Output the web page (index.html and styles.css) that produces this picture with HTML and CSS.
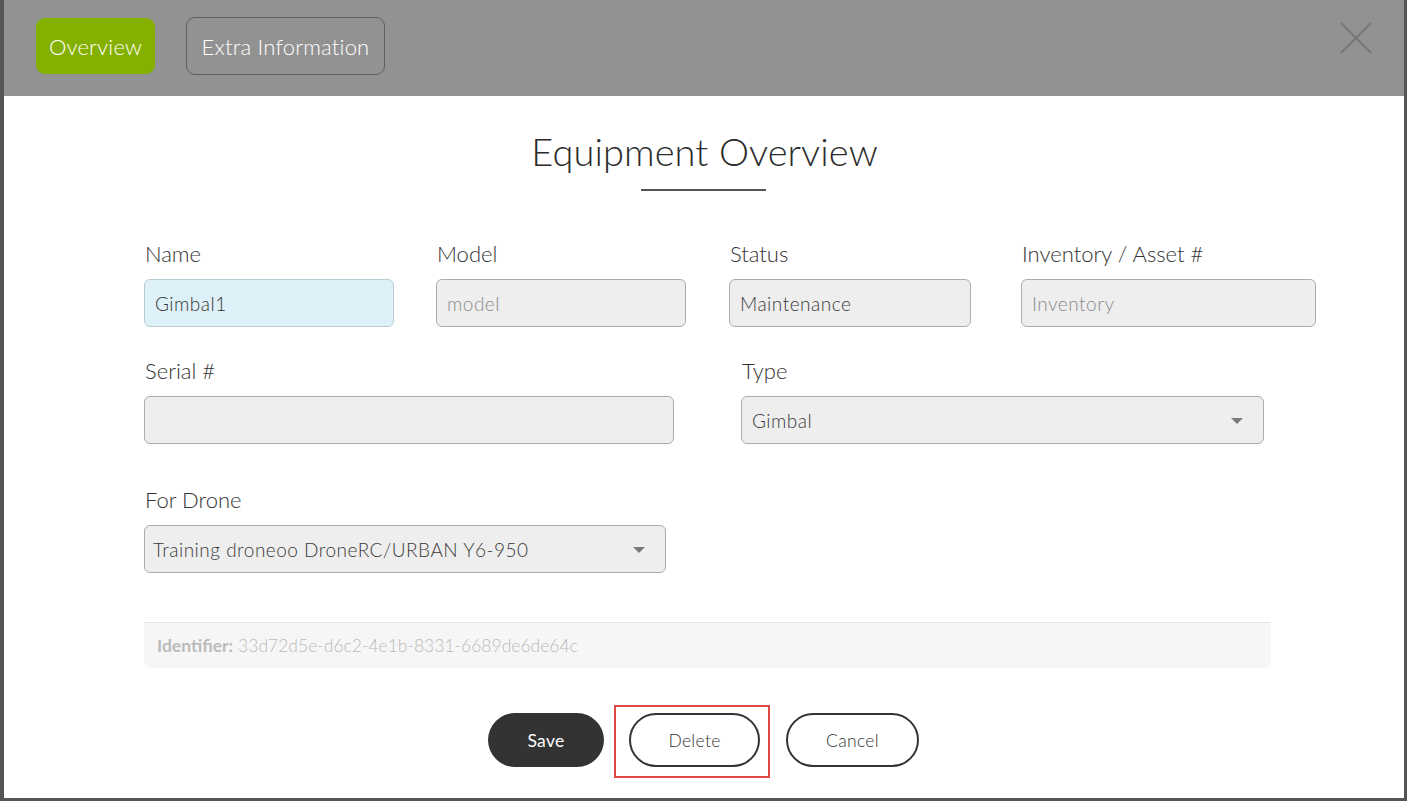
FILE: index.html
```html
<!DOCTYPE html>
<html>
<head>
<meta charset="utf-8">
<link rel="stylesheet" href="styles.css">
</head>
<body>
<div class="modal">
  <div class="header">
    <div class="tabs">
      <button class="tab tab-active">Overview</button>
      <button class="tab tab-outline">Extra Information</button>
    </div>
    <svg class="close" width="34" height="34" viewBox="0 0 34 34"><path d="M2 2 L32 32 M32 2 L2 32" stroke="#787878" stroke-width="2.2" fill="none"/></svg>
  </div>
  <div class="body">
    <h1 class="title">Equipment Overview</h1>
    <div class="rule"></div>
    <div class="row row1">
      <div class="field f-name">
        <label>Name</label>
        <div class="input input-focus">Gimbal1</div>
      </div>
      <div class="field f-model">
        <label>Model</label>
        <div class="input placeholder">model</div>
      </div>
      <div class="field f-status">
        <label>Status</label>
        <div class="input">Maintenance</div>
      </div>
      <div class="field f-inv">
        <label>Inventory / Asset #</label>
        <div class="input placeholder">Inventory</div>
      </div>
    </div>
    <div class="row row2">
      <div class="field f-serial">
        <label>Serial #</label>
        <div class="input"></div>
      </div>
      <div class="field f-type">
        <label>Type</label>
        <div class="input select">Gimbal<span class="caret"></span></div>
      </div>
    </div>
    <div class="row row3">
      <div class="field f-drone">
        <label>For Drone</label>
        <div class="input select">Training droneoo DroneRC/URBAN Y6-950<span class="caret"></span></div>
      </div>
    </div>
    <div class="ident"><b>Identifier:</b> 33d72d5e-d6c2-4e1b-8331-6689de6de64c</div>
    <div class="actions">
      <button class="btn btn-dark">Save</button>
      <div class="highlight"><button class="btn btn-outline btn-delete">Delete</button></div>
      <button class="btn btn-outline btn-cancel">Cancel</button>
    </div>
  </div>
</div>
</body>
</html>
```
FILE: styles.css
```css
* { box-sizing: border-box; }
html, body { margin: 0; padding: 0; }
body {
  background: #555555;
  width: 1407px;
  height: 801px;
  overflow: hidden;
  font-family: Lato, "Open Sans", sans-serif;
}
.modal {
  margin: 0 3px 0 4px;
  width: 1400px;
  height: 798px;
  background: #ffffff;
  display: flex;
  flex-direction: column;
}
.header {
  height: 96px;
  background: #929292;
  display: flex;
  justify-content: space-between;
  align-items: flex-start;
  padding: 17px 32px 0 32px;
}
.tabs { display: flex; gap: 31px; }
.tab {
  font-family: Lato, sans-serif;
  font-size: 22px;
  font-weight: 300;
  color: #ffffff;
  height: 57px;
  padding: 0 10px;
  border-radius: 9px;
  cursor: pointer;
  letter-spacing: 0.2px;
}
.tab-active {
  background: #84b000;
  border: none;
  margin-top: 1px;
  height: 56px;
  width: 119px;
}
.tab-outline {
  background: transparent;
  border: 1px solid #5f5f5f;
  height: 58px;
  width: 199px;
}
.close { margin-top: 4px; margin-right: -1px; }
.body {
  flex: 1;
  display: flex;
  flex-direction: column;
  padding: 0 0 0 140px;
}
.title {
  margin: 33px 0 0 0;
  width: 1121px;
  text-align: center;
  font-weight: 300;
  font-size: 38px;
  line-height: 44px;
  color: #2b2b2b;
  letter-spacing: 0.1px;
}
.rule {
  width: 125px;
  height: 2px;
  background: #555555;
  margin: 16px 0 0 497px;
}
.row { display: flex; }
.row1 { margin-top: 50px; }
.row2 { margin-top: 31px; }
.row3 { margin-top: 43px; }
.field { display: flex; flex-direction: column; }
.field label {
  font-size: 22px;
  font-weight: 300;
  color: #333333;
  line-height: 26px;
  padding-left: 1px;
  margin-bottom: 12px;
}
.input {
  height: 48px;
  border: 1px solid #acacac;
  border-radius: 6px;
  background: #eeeeee;
  font-size: 19px;
  font-weight: 300;
  letter-spacing: 0.5px;
  color: #3a3a3a;
  display: flex;
  align-items: center;
  padding: 0 10px;
  position: relative;
}
.input-focus { background: #dff1f8; border-color: #b9cdd5; color: #333; }
.placeholder { color: #8a8a8a; }
.f-name { width: 292px; }
.f-name .input { width: 250px; }
.f-model { width: 293px; }
.f-model .input { width: 250px; }
.f-status { width: 292px; }
.f-status .input { width: 242px; }
.f-inv .input { width: 295px; }
.f-serial { width: 597px; }
.f-serial .input { width: 530px; }
.f-type .input { width: 523px; }
.f-drone .input { width: 522px; padding-left: 8px; }
.select { padding-right: 30px; }
.caret {
  position: absolute;
  right: 20px;
  top: 21px;
  width: 0;
  height: 0;
  border-left: 6px solid transparent;
  border-right: 6px solid transparent;
  border-top: 6px solid #7a7a7a;
}
.ident {
  margin-top: 49px;
  width: 1127px;
  height: 46px;
  background: #f6f6f6;
  border-top: 1px solid #e6e6e6;
  border-radius: 0 0 6px 6px;
  padding: 0 13px;
  display: flex;
  align-items: center;
  font-size: 17.5px;
  color: #bbbbbb;
  font-weight: 300;
}
.ident b { font-weight: 700; margin-right: 5px; }
.actions {
  margin-top: 37px;
  display: flex;
  align-items: flex-start;
  padding-left: 344px;
}
.btn {
  font-family: Lato, sans-serif;
  font-size: 17.5px;
  font-weight: 300;
  height: 54px;
  border-radius: 27px;
  cursor: pointer;
  letter-spacing: 0.3px;
}
.btn-dark {
  background: #333333;
  color: #ffffff;
  border: none;
  width: 116px;
  margin: 8px 10px 0 0;
  font-weight: 400;
}
.btn-outline {
  background: #ffffff;
  color: #333333;
  border: 2px solid #333333;
}
.btn-cancel { width: 133px; margin-top: 8px; }
.btn-delete { width: 131px; }
.highlight {
  border: 2px solid #e04848;
  padding: 6px 8px 9px 13px;
  margin-right: 16px;
}
```
